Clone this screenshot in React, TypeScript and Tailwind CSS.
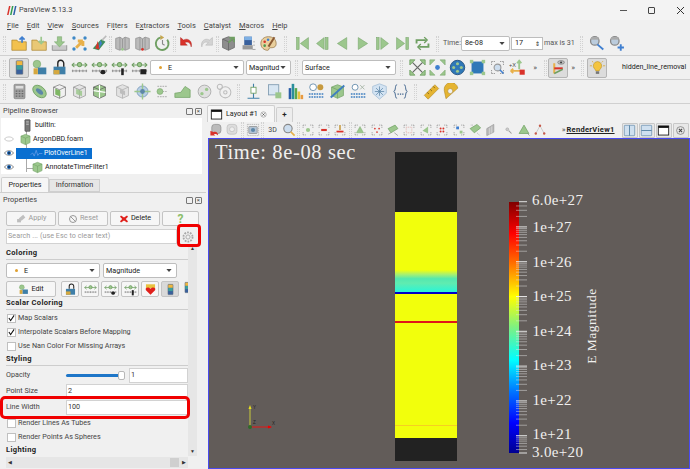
import React from "react";

const G = "#9cc78d";
const GD = "#6f9f62";
const Y = "#f2c14e";
const O = "#e8b04a";
const B = "#3f7fd0";
const R = "#d9322a";

const cube = (c: string, d: string, o = 1) => (
  <g opacity={o}>
    <path d="M10 2l7 2.800v10L10 18l-7-3.200v-10z" fill={c} stroke={d} strokeWidth=".8" />
    <path d="M3 4.800L10 8l7-3.200M10 8v10" fill="none" stroke={d} strokeWidth=".8" />
  </g>
);
const arrows = (c = GD) => (
  <g fill="none" stroke={c} strokeWidth="1.200">
    <path d="M1 7h18M1 7l3-2.500M1 7l3 2.500M19 7l-3-2.500M19 7l-3 2.500" />
    <circle cx="10" cy="6.500" r="2.500" fill={G} />
    <path d="M1 14h18M2 12.500v3M6 12.500v3M10 12.500v3M14 12.500v3M18 12.500v3" stroke="#777" strokeWidth=".8" />
  </g>
);
const frame = (<path d="M3 3h4M13 3h4M17 3v4M17 13v4M3 17h4M13 17h4M3 3v4M3 13v4" fill="none" stroke="#999" strokeWidth="1.200" strokeDasharray="1.500 1" />);
const bars = (
  <g>
    <rect x="6" y="2" width="8" height="16" rx="1" fill="#39609c" stroke="#777" strokeWidth=".6" />
    <rect x="6.500" y="2.500" width="7" height="5" fill="#f0b73e" />
    <rect x="6.500" y="7.500" width="7" height="5" fill="#3d9e9a" />
  </g>
);

const icons: Record<string, React.ReactNode> = {
  folderOpen: (<g><path d="M1 6h6l1.500 2H18v10H1z" fill={Y} stroke="#a8812c" strokeWidth=".8" /><path d="M13 9V3M10 5.500L13 2.500 16 5.500" stroke={B} strokeWidth="2" fill="none" /></g>),
  folderGreen: (<g><path d="M1 6h6l1.500 2H18v10H1z" fill="#e9c875" stroke="#a8812c" strokeWidth=".8" /><path d="M12 10V2M9 7l3 3 3-3" stroke={G} strokeWidth="2" fill="none" /></g>),
  save: (<g><path d="M1.500 12v6h17v-6" fill="#c9c9c9" stroke="#8d8d8d" /><path d="M7.500 2h5v6h3.500l-6 6-6-6h3.500z" fill={G} stroke={GD} strokeWidth=".6" /></g>),
  reset: (<g><path d="M6 15L14 7M14 7H8M14 7v6" stroke={O} strokeWidth="3.400" fill="none" /><g fill="#3f88c5"><circle cx="3.500" cy="3.500" r="2" /><circle cx="16.500" cy="3.500" r="2" /><circle cx="3.500" cy="16.500" r="2" /><circle cx="16.500" cy="16.500" r="2" /></g></g>),
  wand: (<g><path d="M2 16L12 5l5 3-8 10z" fill="#3f8f5f" /><path d="M5 16l3-9 2 10z" fill={R} /><path d="M9 16l2-10 2 4z" fill={B} /><path d="M13 6l5-5" stroke="#bbb" strokeWidth="1.800" /></g>),
  lib: (<g><path d="M2 4l5-1.500 3 2 3-2 5 1.500v12l-5 2-3-2-3 2-5-2z" fill="#bbb" stroke="#888" strokeWidth=".8" /><path d="M7 2.500v15M10 4.500v11M13 2.500v15" stroke="#8a8a8a" strokeWidth=".8" /><circle cx="10" cy="17" r="1.600" fill={G} /></g>),
  libR: (<g><path d="M2 4l5-1.500 3 2 3-2 5 1.500v12l-5 2-3-2-3 2-5-2z" fill="#bbb" stroke="#888" strokeWidth=".8" /><path d="M7 2.500v15M10 4.500v11M13 2.500v15" stroke="#8a8a8a" strokeWidth=".8" /><circle cx="10" cy="17" r="1.600" fill={R} /></g>),
  clock: (<g><path d="M15.500 5.500A7.500 7.500 0 1 1 8 2.800" fill="none" stroke={GD} strokeWidth="2.200" /><path d="M7.500 0l4.500 2.800L7.500 6z" fill="#c6a64f" /><path d="M10 6v4.500l2.500 1.500" stroke="#888" fill="none" strokeWidth="1.300" /></g>),
  undo: (<path d="M3 3v9h8L8 9c3-1.500 6.500-.5 7.500 5 2-6-3.500-11.500-9-8z" fill={R} stroke="#a51f1a" strokeWidth=".5" />),
  redo: (<path d="M17 3v9H9l3-3c-3-1.500-6.500-.5-7.500 5-2-6 3.500-11.500 9-8z" fill="#d3d3d3" stroke="#aaa" strokeWidth=".5" />),
  cubeArrow: (<g>{cube("#8d8d8d", "#5e5e5e")}<path d="M10 9l6-6M11 3h5.500v5.500" stroke={GD} strokeWidth="2" fill="none" /></g>),
  computer: (<g><rect x="5" y="2" width="9" height="10" fill="#39609c" /><rect x="5" y="2" width="9" height="4" fill="#7eb0e4" /><rect x="3" y="12" width="12" height="5" fill="#999" /><path d="M16 8h2M16 12h2M15 17h3" stroke="#555" strokeDasharray="1 1" /></g>),
  palette: (<g><path d="M10 2C5 2 1 5 1 10s4 8 8 8c2 0 1-3 3-3 3 0 7 0 7-5 0-5-4-8-9-8z" fill="#e9cf9d" stroke="#8d6c39" strokeWidth=".8" /><circle cx="5.500" cy="8" r="1.500" fill={R} /><circle cx="9.500" cy="5.500" r="1.500" fill={B} /><circle cx="5.500" cy="12.500" r="1.500" fill="#4a9b4f" /><path d="M9 13L16 2l2 1.200L11 14.500z" fill="#8a5a33" /></g>),
  first: (<g fill={G} stroke={GD} strokeWidth=".6"><rect x="3" y="3" width="3" height="14" /><path d="M17 3v14L7.500 10z" /></g>),
  prev: (<g fill={G} stroke={GD} strokeWidth=".6"><path d="M12 3v14L3 10z" /><rect x="13.500" y="3" width="3" height="14" /></g>),
  rev: (<path d="M15 3v14L4 10z" fill={G} stroke={GD} strokeWidth=".6" />),
  play: (<path d="M5 3v14l11-7z" fill={G} stroke={GD} strokeWidth=".6" />),
  next: (<g fill={G} stroke={GD} strokeWidth=".6"><rect x="3" y="3" width="3" height="14" /><path d="M8 3v14l9-7z" /></g>),
  last: (<g fill={G} stroke={GD} strokeWidth=".6"><path d="M3 3v14l9.500-7z" /><rect x="14" y="3" width="3" height="14" /></g>),
  loop: (<g fill="none" stroke={GD} strokeWidth="2.200"><path d="M3 10V6h11M17 10v4H6" /><path d="M12 2.500L15.500 6 12 9.500M8 10.500L4.500 14 8 17.500" strokeWidth="1.600" /></g>),
  zoomBlue: (<g><circle cx="8" cy="7" r="5" fill="#bcd" stroke="#888" strokeWidth="1.500" /><rect x="3.500" y="2.500" width="9" height="3" fill="#aaa" /><path d="M11 11l7 6" stroke={B} strokeWidth="2.200" /></g>),
  zoomPlus: (<g><circle cx="8" cy="7" r="5" fill="#bcd" stroke="#888" strokeWidth="1.500" /><rect x="3.500" y="2.500" width="9" height="3" fill="#aaa" /><path d="M15 11v7.500M11.250 14.750h7.500" stroke={B} strokeWidth="2.200" /></g>),
  colorMap: bars,
  blocks: (<g><circle cx="7" cy="6" r="4.500" fill={G} stroke={GD} strokeWidth=".6" /><rect x="8" y="10" width="10" height="8" fill="#3f7fa8" /><rect x="3" y="11" width="5" height="7" fill="#d6a83f" /></g>),
  lockMap: (<g><rect x="3" y="9" width="14" height="9" fill="#3f7fa8" /><rect x="3" y="13" width="7" height="5" fill="#d6a83f" /><path d="M8 9V5a3.500 3.500 0 0 1 7 0v4" fill="none" stroke="#222" strokeWidth="1.600" /></g>),
  ar: arrows(),
  arC: (<g>{arrows()}<rect x="11" y="13" width="6" height="5" rx="2.500" fill="#222" /></g>),
  arF: (<g>{arrows()}<rect x="12" y="11" width="3" height="8" fill="#222" /></g>),
  arD: (<g>{arrows()}<rect x="11" y="12" width="7" height="6" fill="#222" /></g>),
  fit: (<g stroke={GD} fill={G} strokeWidth="1"><path d="M4 4l12 12M16 4L4 16" stroke="#666" strokeWidth="1.400" /><path d="M1 1h6L1 7zM19 1h-6l6 6zM1 19h6l-6-6zM19 19h-6l6-6z" /></g>),
  fit2: (<g fill={G} stroke={GD} strokeWidth=".6"><path d="M1 1h6L1 7zM19 1h-6l6 6zM1 19h6l-6-6zM19 19h-6l6-6z" /><circle cx="10" cy="10" r="2.800" fill={B} stroke="none" /></g>),
  sphere: (<g><circle cx="10" cy="10" r="8.500" fill="#2f78b8" stroke="#1e4c78" /><g fill={G}><circle cx="10" cy="5.500" r="1.800" /><circle cx="10" cy="14.500" r="1.800" /><circle cx="5.500" cy="10" r="1.800" /><circle cx="14.500" cy="10" r="1.800" /></g></g>),
  fitBlock: (<g><rect x="3" y="3" width="14" height="14" fill="#2f78b8" /><g fill={G}><rect x="1" y="1" width="4" height="4" /><rect x="15" y="1" width="4" height="4" /><rect x="1" y="15" width="4" height="4" /><rect x="15" y="15" width="4" height="4" /></g></g>),
  zoomBox: (<g>{frame}<circle cx="10" cy="10" r="4" fill="#cde" stroke="#999" strokeWidth="1.300" /><path d="M13 13l4 4" stroke={B} strokeWidth="1.800" /></g>),
  axisSet: (<g><path d="M2 14h12M2 14l3-2.500M2 14l3 2.500" stroke={O} strokeWidth="2.200" fill="none" /><path d="M12 12V2M9.500 5L12 2l2.500 3" stroke={G} strokeWidth="2.200" fill="none" /><rect x="12.500" y="12.500" width="6" height="6" fill={R} /><text x="0" y="9" fontSize="6.500" fontFamily="Liberation Sans" fill="#444">+X</text></g>),
  orient: (<g><path d="M5 17V5" stroke={O} strokeWidth="2.400" /><path d="M5 11h10" stroke={R} strokeWidth="2.400" /><path d="M5 17l10-5" stroke={GD} strokeWidth="1.800" /><ellipse cx="13" cy="4" rx="4" ry="2.200" fill="#bbb" stroke="#666" strokeWidth=".6" /><circle cx="13" cy="4" r="1.100" fill="#333" /></g>),
  bulb: (<g><path d="M10 3a5 5 0 0 0-3.500 8.500c1 1 1.500 2.500 1.500 2.500h4s.5-1.500 1.500-2.500A5 5 0 0 0 10 3z" fill="#f4c43f" stroke="#b8912a" strokeWidth=".7" /><rect x="8" y="14.500" width="4" height="3" fill="#777" /><path d="M1 8h2.500M16.500 8H19M3.500 2.500L5 4M16.500 2.500L15 4" stroke="#d6aa3c" /></g>),
  calc: (<g><rect x="3.500" y="1.500" width="13" height="17" rx="1.500" fill="#a3a3a3" stroke="#6e6e6e" strokeWidth=".6" /><rect x="5.500" y="3.500" width="9" height="3" fill="#ddd" /><path d="M5.500 9.500h9M5.500 12.500h9M5.500 15.500h9" stroke="#666" strokeWidth="1.600" strokeDasharray="2 1.500" /></g>),
  slice: (<g><ellipse cx="10" cy="10" rx="9" ry="6" transform="rotate(40 10 10)" fill={G} stroke={GD} /><ellipse cx="10" cy="10" rx="5" ry="2.500" transform="rotate(40 10 10)" fill="#5d87a8" /></g>),
  cubeG: cube(G, GD),
  cubeW: (<g>{cube("#e4e4e4", "#8c8c8c")}<path d="M6 7l7 2.500v6L6 13z" fill={G} opacity=".85" /></g>),
  cubeV: (<g>{cube("#f0f0f0", "#6f6f6f")}<path d="M5 6.500l6 2.500v7l-6-2.500z" fill="#7fb765" /></g>),
  cubeC: (<g>{cube(G, "#555")}<path d="M10 2v16M3 9l14 2" stroke="#fff" strokeWidth="1.300" /></g>),
  cubeGrey: (<g>{cube("#e2e2e2", "#a8a8a8")}<path d="M7 7l6 2.500v5L7 12z" fill="#bdbdbd" /></g>),
  probe: (<g><circle cx="10" cy="10" r="6.500" fill="#b7cfe6" stroke="#7a9ab8" /><path d="M10 .5v19M.5 10h19" stroke={G} strokeWidth="1.600" /><circle cx="10" cy="10" r="2.800" fill="#5d87a8" /></g>),
  list: (<g><path d="M4 4h12M4 16h12M7 10h9" stroke="#b9b9b9" strokeWidth="1.400" strokeDasharray="2 1" /><circle cx="7" cy="10" r="3.500" fill={G} stroke={GD} strokeWidth=".6" /></g>),
  hill: (<path d="M1 17v-5l7-1 5-7 6 4v9z" fill={G} stroke={GD} strokeWidth=".8" />),
  circles: (<g><circle cx="10" cy="10" r="7.500" fill="#e0e0e0" stroke="#a8a8a8" /><circle cx="12.500" cy="7.500" r="2" fill={G} /><circle cx="7" cy="12.500" r="2" fill={G} /></g>),
  circlesW: (<g fill="none" stroke="#bbb" strokeWidth="1.200"><circle cx="11" cy="11" r="6.500" /><circle cx="4.500" cy="4.500" r="3" /><circle cx="11" cy="11" r="2" /></g>),
  plotBox: (<g stroke="#3f7fa8" fill="none"><path d="M3 18h14M10 1v17" strokeWidth="1.300" /><rect x="7" y="5" width="6" height="7" fill="#fff" stroke={GD} /></g>),
  ext: (<g><rect x="3" y="2" width="12" height="12" fill="#d8e6f2" stroke="#7f9ab0" /><rect x="11" y="11" width="7" height="7" fill={G} /></g>),
  hist: (<g><rect x="2" y="6" width="3" height="13" fill="#2a5da8" /><rect x="5.500" y="1" width="3" height="18" fill="#2a8f9c" /><rect x="9" y="6" width="3" height="13" fill="#5aa84f" /><rect x="12.500" y="10" width="3" height="9" fill="#e8c23f" /><rect x="16" y="14" width="3" height="5" fill="#e89a3f" /></g>),
  time1: (<g><circle cx="6" cy="5" r="4" fill="#fff" stroke="#5d87a8" /><circle cx="14.500" cy="5" r="3.500" fill="#c79a3f" /><path d="M1 13h18M1 16.500h18" stroke="#3f7fc0" strokeWidth="1.700" strokeDasharray="2 1" /></g>),
  cubeSlash: (<g>{cube(G, GD)}<path d="M2 17L18 3" stroke="#3f7fc0" strokeWidth="2.200" /></g>),
  time2: (<g><circle cx="6" cy="5" r="3.500" fill="#fff" stroke="#5d87a8" /><path d="M12 2.500l5 5M17 2.500l-5 5" stroke="#a0b0a0" /><path d="M1 13h18M1 16.500h18" stroke="#3f7fc0" strokeWidth="1.700" strokeDasharray="2 1" /></g>),
  shield: (<g><path d="M10 1l8 3v8l-8 7-8-7V4z" fill="#d3e3f2" stroke="#a8c0d8" /><path d="M10 4v11M4.500 10h11M6 6l8 8M14 6l-8 8" stroke="#5d87a8" strokeWidth=".9" /></g>),
  braces: (<g fill="none" stroke="#3a5f8a" strokeWidth="1.100"><path d="M6 2c-3 0-1 7-4 8 3 1 1 8 4 8M14 2c3 0 1 7 4 8-3 1-1 8-4 8" /><path d="M6.500 13h1.500M9.300 13h1.500M12 13h1.500" strokeWidth="1.400" /></g>),
  ruler: (<g><path d="M1.500 14.500L14 2l4.500 4.500L6 19z" fill="#e5b431" stroke="#a67f1e" strokeWidth=".6" /><path d="M5 11l2 2M8.500 7.500l2 2M12 4l2 2" stroke="#7a5e16" /></g>),
  protractor: (<g><path d="M3.500 18.500L1.500 9a8 8 0 0 1 16-3z" fill="#e5b431" stroke="#a67f1e" strokeWidth=".6" /><circle cx="8.500" cy="9.500" r="3" fill="#f0f0f0" stroke="#a67f1e" strokeWidth=".6" /></g>),
  layoutWin: (<g><rect x="2" y="3" width="16" height="14" fill="#fff" stroke="#111" strokeWidth="1.300" /><rect x="2" y="3" width="16" height="3" fill="#111" /></g>),
  camUndo: (<g><rect x="4" y="2" width="13" height="13" rx="4" fill="#bbb" stroke="#8a8a8a" /><path d="M2 11v7h7l-2-2c2-1 5 0 6 2 0-5-3-6.500-7-5z" fill={R} /></g>),
  camRedo: (<g><rect x="3" y="2" width="14" height="14" rx="4" fill="#ddd" stroke="#bbb" /><circle cx="10" cy="9" r="3.500" fill="#eee" stroke="#bbb" /></g>),
  camera: (<g><rect x="2" y="2" width="16" height="16" fill="none" stroke="#a7a7a7" strokeDasharray="2 1" /><rect x="4" y="5" width="12" height="10" rx="1" fill="#b4c4d4" stroke="#888" /><circle cx="10" cy="10" r="3" fill="#5d87a8" /></g>),
  zoomOrange: (<g><circle cx="8.500" cy="8" r="6" fill="#cde" stroke="#888" strokeWidth="1.600" /><path d="M12.500 12.500l5.500 5.500" stroke={O} strokeWidth="2.500" /></g>),
  selPlus: (<g>{frame}<circle cx="10" cy="10" r="3" fill={G} /></g>),
  selMinus: (<g>{frame}<rect x="6" y="8.500" width="8" height="3" fill={R} /></g>),
  selSub: (<g>{frame}<path d="M10 3v7" stroke="#c79a3f" strokeWidth="2.200" /><rect x="5" y="11" width="10" height="2.500" fill={R} /></g>),
  selTri: (<g>{frame}<path d="M10 5l5 9H5z" fill={G} stroke={GD} strokeWidth=".6" /></g>),
  selPts: (<g>{frame}<g fill={R}><circle cx="7" cy="8" r="1.200" /><circle cx="13" cy="8" r="1.200" /><circle cx="10" cy="13" r="1.200" /></g></g>),
  selPoly: (<g><path d="M3 8l10-5 4 5-10 6z" fill={G} stroke={GD} /><path d="M3 16l4-2M12 14l5 4" stroke="#888" /></g>),
  selDash: (<g>{frame}<path d="M6 6h8v8H6z" fill="none" stroke="#e0a8a0" strokeDasharray="1.500 1" /></g>),
  selLeaf: (<g>{frame}<path d="M5 11l8-6v10z" fill={G} /></g>),
  selDots: (<g>{frame}<g fill={R}><circle cx="8" cy="8" r="1.400" /><circle cx="12" cy="8" r="1.400" /><circle cx="8" cy="12" r="1.400" /><circle cx="12" cy="12" r="1.400" /></g></g>),
  selBlue: (<g>{frame}<rect x="6" y="5" width="4" height="4" fill={B} /><rect x="11" y="11" width="4" height="4" fill={G} /></g>),
  selPolyG: (<g><path d="M3 8l10-6 5 5-9 7z" fill={G} stroke={GD} /><path d="M4 3h3M13 14l4 4" stroke="#888" strokeDasharray="1 1" /></g>),
  selGrey: (<g><path d="M4 18V8l10-6v11z" fill="#bbb" stroke="#999" /><path d="M8 7v10M11 5v10" stroke="#ddd" /></g>),
  mag: (<g><circle cx="9" cy="9" r="2" fill="#ccc" stroke="#aaa" /><path d="M11 11l4 4" stroke="#999" strokeWidth="1.500" /></g>),
  tri: (<g><path d="M10 3l7 12H3z" fill={G} stroke={GD} /><path d="M15 15l3 3" stroke="#888" /></g>),
  triPts: (<g fill="#c65a4a"><path d="M10 4L4 15M10 4l6 11" stroke="#bbb" /><circle cx="10" cy="4" r="1.700" /><circle cx="4" cy="15" r="1.700" /><circle cx="16" cy="15" r="1.700" /></g>),
  split1: (<g><rect x="2" y="2" width="16" height="16" rx="1" fill="#cfe0f0" stroke="#5d87a8" /><path d="M10 2v16" stroke="#5d87a8" strokeWidth="1.500" /></g>),
  split2: (<g><rect x="2" y="2" width="16" height="16" rx="1" fill="#cfe0f0" stroke="#5d87a8" /><path d="M2 10h16" stroke="#5d87a8" strokeWidth="1.500" /></g>),
  closeC: (<g><circle cx="10" cy="10" r="6" fill="none" stroke="#666" /><path d="M7.500 7.500l5 5M12.500 7.500l-5 5" stroke="#444" strokeWidth="1.600" /></g>),
  gear: (<g fill="none" stroke="#a8a8a8"><circle cx="10" cy="10" r="3" strokeWidth="1.300" /><circle cx="10" cy="10" r="6.500" strokeWidth="2.600" strokeDasharray="2.500 1.580" /></g>),
  cross: (<path d="M4 3l6 4 6-4 2 2.500L13.500 10l4.500 4.500-2 2.500-6-4-6 4-2-2.500L6.500 10 2 5.500z" fill="#e0201c" />),
  heart: (<g><rect x="3" y="2" width="14" height="6" fill="#e8c23f" /><path d="M10 18L3 11c-2-3 3-6 7-2 4-4 9-1 7 2z" fill="#e0201c" /></g>),
  applyI: (<g><path d="M5 10l8-7 4 5-7 6z" fill="#c0c0c0" /><rect x="2" y="11" width="7" height="6" fill="#bdbdbd" /></g>),
  resetI: (<g><circle cx="10" cy="10" r="7" fill="none" stroke="#8f8f8f" strokeWidth="1.800" /><path d="M5 5l10 10" stroke="#8f8f8f" strokeWidth="1.800" /></g>),
  eye: (<g><path d="M1 10c3-6 15-6 18 0-3 6-15 6-18 0z" fill="#fff" stroke="#222" /><circle cx="10" cy="10" r="4" fill="#1c64b4" /><circle cx="10" cy="10" r="1.600" fill="#000" /></g>),
  eyeOff: (<path d="M1 10c3-5.500 15-5.500 18 0-3 5.500-15 5.500-18 0z" fill="#fff" stroke="#aaa" strokeWidth="1.200" />),
  server: (<g><rect x="6" y="1" width="8" height="18" rx="1" fill="#777" stroke="#333" strokeWidth=".8" /><path d="M8 4.500h4M8 8h4" stroke="#eee" /></g>),
  plot: (<path d="M1 12l3-3 2.500 5 3-9 2.500 8 2-3h5" fill="none" stroke="#6fa0e8" strokeWidth="1.100" />),
};

const Ico = ({ n, active }: { n: string; active?: boolean }) => (
  <span className={`flex h-5 w-5 shrink-0 items-center justify-center ${active ? "rounded-[2px] border border-[#b5b5b5] bg-[#dcdcdc]" : ""}`}>
    <svg width="17" height="17" viewBox="0 0 20 20">{icons[n]}</svg>
  </span>
);
const Sep = ({ cls = "" }: { cls?: string }) => <span className={`h-4 w-[3px] shrink-0 border-x border-dotted border-[#d2d2d2] ${cls}`} />;
const Icons = ({ names, gap = "" }: { names: string[]; gap?: string }) => (
  <div className={`flex items-center ${gap}`}>{names.map((n, i) => <Ico key={i} n={n} />)}</div>
);
const Chev = () => (
  <svg width="6" height="3" viewBox="0 0 7 4" className="shrink-0"><path d="M0 0h7L3.500 4z" fill="#444" /></svg>
);
const Combo = ({ label, w, dot }: { label: string; w: string; dot?: boolean }) => (
  <div className={`flex h-[15px] shrink-0 items-center rounded-[2px] border border-[#bdbdbd] bg-white pl-[2px] pr-[4px] text-[7.200px] leading-none text-[#222] ${w}`}>
    {dot && <span className="ml-[6px] mr-[6px] h-[3px] w-[3px] rounded-full bg-[#e0a030]" />}
    <span className="flex-1 whitespace-nowrap">{label}</span>
    <Chev />
  </div>
);
const Box = ({ checked }: { checked?: boolean }) => (
  <span className="mr-[2px] flex h-[9px] w-[9px] shrink-0 items-center justify-center border border-[#c0c0c0] bg-white">
    {checked && <svg width="8" height="8" viewBox="0 0 8 8"><path d="M1 4l2 3 4-6" fill="none" stroke="#111" strokeWidth="1.200" /></svg>}
  </span>
);
const Check = ({ label, checked }: { label: string; checked?: boolean }) => (
  <div className="flex h-[14px] items-center pl-[7px] text-[7.200px] text-[#444]"><Box checked={checked} /><span>{label}</span></div>
);
const Section = ({ label }: { label: string }) => (
  <div className="pl-[6px]">
    <div className="text-[7.500px] font-bold leading-[10px] tracking-[.35px] text-[#222]">{label}</div>
    <div className="mt-[1px] h-px bg-[#cdcdcd]" />
  </div>
);
const DockHead = ({ label }: { label: string }) => (
  <div className="flex h-[12px] items-center justify-between pl-[3px] pr-[4px] text-[7.300px] tracking-[.05px] text-[#444]">
    <span>{label}</span>
    <span className="flex gap-[2px]">
      <span className="h-[7px] w-[7px] rounded-[1px] border border-[#777]" />
      <span className="flex h-[7px] w-[7px] items-center justify-center rounded-[1px] border border-[#777] text-[6px] leading-none">×</span>
    </span>
  </div>
);
const Btn = ({ w, children, dim }: { w: string; children: React.ReactNode; dim?: boolean }) => (
  <div className={`flex h-[15px] shrink-0 items-center justify-center gap-[2px] rounded-[2px] border border-[#c4c4c4] bg-[#f6f6f6] text-[7.200px] ${dim ? "text-[#9a9a9a]" : "text-[#222]"} ${w}`}>{children}</div>
);
const TinyBtn = ({ n, active }: { n: string; active?: boolean }) => (
  <div className={`flex h-[16px] w-[18px] shrink-0 items-center justify-center rounded-[2px] border border-[#c4c4c4] ${active ? "bg-[#d9d9d9]" : "bg-[#f6f6f6]"}`}>
    <svg width="13" height="13" viewBox="0 0 20 20">{icons[n]}</svg>
  </div>
);
const TreeRow = ({ eye, pad, icon, label, sel }: { eye?: "on" | "off"; pad: string; icon: string; label: string; sel?: boolean }) => (
  <div className="relative flex h-[14px] items-center">
    <span className="flex w-[15px] shrink-0 justify-center">
      {eye && <svg width="10" height="10" viewBox="0 0 20 20">{icons[eye === "on" ? "eye" : "eyeOff"]}</svg>}
    </span>
    <span className={`flex h-[11px] items-center ${pad} ${sel ? "bg-[#0a6fd0]" : ""}`}>
      <svg width="13" height="13" viewBox="0 0 20 20" className="shrink-0">{icons[icon]}</svg>
      <span className={`pl-[1px] pr-[4px] text-[7px] ${sel ? "text-white" : "text-[#222]"}`}>{label}</span>
    </span>
  </div>
);
const Input = ({ v, w }: { v: string; w: string }) => (
  <div className={`flex h-[15px] items-center border border-[#d2d2d2] bg-white pl-[1px] text-[7.200px] text-[#333] ${w}`}>{v}</div>
);
const V = ({ n, w = "w-[16px]" }: { n: string; w?: string }) => (
  <span className={`flex shrink-0 justify-center ${w}`}><svg width="14" height="14" viewBox="0 0 20 20">{icons[n]}</svg></span>
);

const OFF_Y = 139;
const majors = [226.9, 261.7, 296.5, 331.3, 366.1, 400.9, 435.7];
const minor: number[] = [];
[192.1, ...majors].forEach((y) => {
  [2, 3, 4, 5, 6, 7, 8, 9].forEach((k) => {
    const p = y + 34.8 * (1 - Math.log10(k));
    if (p > 204 && p < 452) minor.push(p);
  });
});
const labels: [string, number][] = [["6.0e+27", 200], ["1e+27", 227.300], ["1e+26", 261.700], ["1e+25", 296.300], ["1e+24", 331], ["1e+23", 365], ["1e+22", 399.700], ["1e+21", 434.300], ["3.0e+20", 451.700]];
const mainTicks = [201.700, ...majors, 453];

const menu: [string, string, string][] = [["", "F", "ile"], ["", "E", "dit"], ["", "V", "iew"], ["", "S", "ources"], ["Fi", "l", "ters"], ["E", "x", "tractors"], ["", "T", "ools"], ["", "C", "atalyst"], ["", "M", "acros"], ["", "H", "elp"]];

export default function App() {
  return (
    <div className="flex h-[469px] w-[690px] flex-col overflow-hidden bg-[#f0f0f0] font-['Roboto',sans-serif] text-[#222]">
      {/* title */}
      <div className="flex h-[20px] shrink-0 items-center bg-[#f3f3f3] pl-[6px]">
        <svg width="11" height="9" viewBox="0 0 11 9"><path d="M1 9L3 0h1.500L2.500 9z" fill="#d9322a" /><path d="M4 9L6 0h1.500L5.500 9z" fill="#2f9a4f" /><path d="M7 9L9 0h1.500L8.500 9z" fill="#2a5da8" /></svg>
        <span className="ml-[2px] text-[7.400px] text-[#444]">ParaView 5.13.3</span>
        <div className="ml-auto flex items-center gap-[21px] pr-[5px] text-[#333]">
          <span className="h-px w-[7px] bg-[#555]" />
          <span className="h-[7px] w-[7px] rounded-[1px] border border-[#444]" />
          <svg width="9" height="9" viewBox="0 0 9 9"><path d="M1 1l7 7M8 1L1 8" stroke="#333" /></svg>
        </div>
      </div>
      {/* menu */}
      <div className="flex h-[12px] shrink-0 items-center gap-[8px] pl-[7px] text-[7.500px] leading-none text-[#444]">
        {menu.map(([a, u, b]) => (
          <span key={u + b}>{a}<span className="underline">{u}</span>{b}</span>
        ))}
      </div>
      {/* toolbar 1 */}
      <div className="flex h-[24px] shrink-0 items-center border-b border-[#d0d0d0] pl-[3px]">
        <Sep cls="mr-[3px]" />
        <Icons names={["folderOpen", "folderGreen", "save", "reset", "wand"]} />
        <Sep />
        <Icons names={["lib", "libR", "clock"]} />
        <Sep cls="mx-[0.500px]" />
        <Icons names={["undo", "redo"]} />
        <Sep cls="-mx-[0.500px]" />
        <Icons names={["cubeArrow", "computer", "palette"]} />
        <Sep cls="mx-[5.500px]" />
        <Icons names={["first", "prev", "rev", "play", "next", "last", "loop"]} />
        <Sep cls="mx-[4px]" />
        <span className="w-[18px] shrink-0 text-[7.200px] text-[#555]">Time:</span>
        <div className="flex h-[15px] w-[49px] shrink-0 items-center justify-between rounded-[2px] border border-[#bdbdbd] bg-white pl-[3px] pr-[4px]"><span className="text-[7.200px]">8e-08</span><Chev /></div>
        <div className="ml-[1px] flex h-[13px] w-[32px] shrink-0 items-center justify-between border border-[#bdbdbd] bg-white pl-[3px] pr-[2px]"><span className="text-[7.200px]">17</span><span className="text-[6px] leading-[6px]">⇕</span></div>
        <span className="ml-[1px] w-[31px] shrink-0 whitespace-nowrap text-[7.200px] text-[#555]">max is 31</span>
        <Sep cls="ml-[5px] mr-[3px]" />
        <Icons names={["zoomBlue", "zoomPlus"]} />
      </div>
      {/* toolbar 2 */}
      <div className="flex h-[24px] shrink-0 items-center border-b border-[#d0d0d0] pl-[3px]">
        <Sep cls="mr-[3px]" />
        <Ico n="colorMap" active />
        <Icons names={["blocks", "lockMap", "ar", "arC", "arF", "arD"]} />
        <span className="w-[1px]" />
        <Combo label="E" w="w-[94px]" dot />
        <span className="w-[2px]" />
        <Combo label="Magnitud" w="w-[45px]" />
        <Sep cls="mx-[4px]" />
        <Combo label="Surface" w="w-[94px]" />
        <Sep cls="mx-[4px]" />
        <Icons names={["fit", "fit2", "sphere", "fitBlock", "zoomBox", "axisSet"]} />
        <span className="w-[16px] text-center text-[8px] text-[#555]">»</span>
        <Sep cls="mx-[1px]" />
        <Ico n="orient" active />
        <span className="w-[10px] text-center text-[8px] text-[#555]">»</span>
        <Sep cls="mx-[3px]" />
        <Ico n="bulb" active />
        <span className="ml-[15px] whitespace-nowrap text-[7.100px] text-[#222]">hidden_line_removal</span>
      </div>
      {/* toolbar 3 */}
      <div className="flex h-[24px] shrink-0 items-center border-b border-[#d0d0d0] pl-[3px]">
        <Sep cls="mr-[3px]" />
        <Icons names={["calc", "slice", "cubeV", "cubeW", "cubeC"]} />
        <span className="w-[3px]" />
        <Icons names={["cubeGrey", "probe", "list", "hill"]} />
        <span className="w-[2px]" />
        <Icons names={["circles", "circlesW"]} />
        <Sep cls="mx-[3px]" />
        <Icons names={["plotBox", "ext", "hist", "time1", "cubeSlash", "time2", "shield", "braces"]} gap="gap-[1px]" />
        <Sep cls="mx-[4px]" />
        <Icons names={["ruler", "protractor"]} />
      </div>
      {/* body */}
      <div className="flex min-h-0 flex-1">
        {/* left */}
        <div className="relative flex w-[206px] shrink-0 flex-col pt-[1px]">
          <DockHead label="Pipeline Browser" />
          <div className="relative ml-[1px] mr-[4px] mt-[1px] h-[56px] bg-white">
            <span className="absolute left-[25px] top-[8px] h-[46px] w-px bg-[#aaaaaa]" />
            <span className="absolute left-[25px] top-[50px] h-px w-[8px] bg-[#aaaaaa]" />
            <TreeRow pad="pl-[5px]" icon="server" label="builtin:" />
            <TreeRow eye="off" pad="pl-[3px]" icon="cubeG" label="ArgonDBD.foam" />
            <TreeRow eye="on" pad="pl-[14px]" icon="plot" label="PlotOverLine1" sel />
            <TreeRow eye="on" pad="pl-[15px]" icon="cubeG" label="AnnotateTimeFilter1" />
          </div>
          <div className="mt-[4px] flex h-[14px] items-end pl-[1px] text-[7.200px]">
            <span className="flex h-[15px] w-[48px] items-center justify-center rounded-t-[2px] border border-b-0 border-[#cfcfcf] bg-[#f6f6f6] text-[#222]">Properties</span>
            <span className="flex h-[13px] w-[51px] items-center justify-center border border-[#cfcfcf] bg-[#e6e6e6] text-[#333]">Information</span>
          </div>
          <div className="border-t border-[#cfcfcf] pt-[1px]">
            <DockHead label="Properties" />
          </div>
          <div className="mt-[5px] flex gap-[2px] pl-[6px]">
            <Btn w="w-[50px]" dim><svg width="11" height="11" viewBox="0 0 20 20">{icons.applyI}</svg>Apply</Btn>
            <Btn w="w-[50px]" dim><svg width="10" height="10" viewBox="0 0 20 20">{icons.resetI}</svg>Reset</Btn>
            <Btn w="w-[50px]"><svg width="10" height="10" viewBox="0 0 20 20">{icons.cross}</svg>Delete</Btn>
            <Btn w="w-[37px]"><span className="text-[12px] font-bold leading-none text-[#8cbf6c]">?</span></Btn>
          </div>
          <div className="mt-[3px] flex items-center pl-[6px]">
            <div className="flex h-[15px] w-[171px] items-center border border-[#d2d2d2] bg-white pl-[1px] text-[7.200px] tracking-[.05px] text-[#9a9a9a]">Search ... (use Esc to clear text)</div>
            <span className="ml-[2px] flex w-[18px] justify-center"><svg width="14" height="14" viewBox="0 0 20 20">{icons.gear}</svg></span>
          </div>
          <div className="flex min-h-0 flex-1">
            <div className="w-[188px] shrink-0 overflow-hidden">
              <div className="mt-[4px]"><Section label="Coloring" /></div>
              <div className="mt-[3px] flex gap-[3px] pl-[6px]">
                <Combo label="E" w="w-[94px]" dot />
                <Combo label="Magnitude" w="w-[74px]" />
              </div>
              <div className="mt-[3px] flex gap-[2px] pl-[6px]">
                <div className="flex h-[16px] w-[50px] shrink-0 items-center justify-center gap-[2px] rounded-[2px] border border-[#c4c4c4] bg-[#f6f6f6] text-[7.200px]">
                  <svg width="11" height="11" viewBox="0 0 20 20">{icons.blocks}</svg>Edit
                </div>
                <span className="w-[1px]" />
                <TinyBtn n="lockMap" /><TinyBtn n="ar" /><TinyBtn n="arC" /><TinyBtn n="arF" />
                <TinyBtn n="heart" /><TinyBtn n="colorMap" active />
                <div className="flex h-[16px] w-[7px] justify-start overflow-hidden"><svg width="13" height="13" viewBox="0 0 20 20" className="shrink-0">{icons.colorMap}</svg></div>
              </div>
              <div className="mt-[1px]"><Section label="Scalar Coloring" /></div>
              <div className="mt-[1px]">
                <Check label="Map Scalars" checked />
                <Check label="Interpolate Scalars Before Mapping" checked />
                <Check label="Use Nan Color For Missing Arrays" />
              </div>
              <div className="mt-[1px]"><Section label="Styling" /></div>
              <div className="mt-[2px] flex h-[15px] items-center pl-[6px] text-[7.200px] text-[#444]">
                <span className="w-[60px]">Opacity</span>
                <div className="relative flex h-[9px] w-[59px] items-center">
                  <span className="h-[3px] w-[56px] rounded-full bg-[#1e76c8]" />
                  <span className="absolute right-[0px] h-[9px] w-[7px] rounded-[2px] border border-[#b8b8b8] bg-white" />
                </div>
                <span className="w-[4px]" />
                <Input v="1" w="w-[59px]" />
              </div>
              <div className="mt-[1px] flex h-[15px] items-center pl-[6px] text-[7.200px] text-[#444]">
                <span className="w-[60px]">Point Size</span>
                <Input v="2" w="w-[122px]" />
              </div>
              <div className="mt-[1px] flex h-[15px] items-center pl-[6px] text-[7.200px] text-[#444]">
                <span className="w-[60px]">Line Width</span>
                <Input v="100" w="w-[122px]" />
              </div>
              <div className="mt-[1px]">
                <Check label="Render Lines As Tubes" />
                <Check label="Render Points As Spheres" />
              </div>
              <div className="mt-[1px]"><Section label="Lighting" /></div>
            </div>
            <div className="flex w-[9px] shrink-0 flex-col items-center justify-between bg-[#e6e6e6] py-[2px] text-[5px] leading-none text-[#333]">
              <span>▲</span><span>▼</span>
            </div>
          </div>
          <div className="mb-[1px] ml-[6px] mr-[18px] mt-[1px] flex h-[11px] shrink-0 items-center justify-between bg-[#e6e6e6] px-[2px] text-[5px] text-[#333]">
            <span>◀</span><span className="ml-auto mr-[3px] h-[9px] w-[9px] bg-[#cfcfcf]" /><span>▶</span>
          </div>
          {/* red highlights */}
          <div className="absolute left-[177px] top-[120px] h-[23px] w-[24px] rounded-[4px] border-[3px] border-[#f00000]" />
          <div className="absolute left-0 top-[292px] h-[23px] w-[190px] rounded-[5px] border-[3px] border-[#f00000]" />
        </div>
        {/* right */}
        <div className="flex min-w-0 flex-1 flex-col pt-[1px]">
          <div className="flex h-[17px] shrink-0 items-end pl-[1px] text-[7.200px]">
            <div className="flex h-[17px] w-[68px] items-center rounded-t-[2px] border border-b-0 border-[#cfcfcf] bg-[#f6f6f6] pl-[2px]">
              <svg width="13" height="13" viewBox="0 0 20 20">{icons.layoutWin}</svg>
              <span className="ml-[3px] whitespace-nowrap">Layout #1</span>
              <svg width="9" height="9" viewBox="0 0 20 20" className="ml-[1px]">{icons.closeC}</svg>
            </div>
            <div className="ml-[1px] flex h-[15px] w-[17px] items-center justify-center rounded-t-[2px] border border-b-0 border-[#cfcfcf] bg-[#ededed] text-[8px] font-bold">+</div>
          </div>
          <div className="flex h-[16px] shrink-0 items-center pl-[2px]">
            <V n="camUndo" /><V n="camRedo" />
            <Sep cls="mx-[1px]" />
            <V n="camera" />
            <Sep />
            <span className="flex w-[17px] shrink-0 justify-center text-[7px] text-[#444]">3D</span>
            <V n="zoomOrange" />
            <Sep />
            <V n="selPlus" /><V n="selMinus" /><V n="selSub" />
            <Sep cls="mx-[0.500px]" />
            {["selTri", "selPts", "selPoly", "selDash", "selLeaf", "selDots", "selBlue", "selPolyG", "selGrey", "mag", "tri", "triPts"].map((n, i) => <V key={i} n={n} w="w-[16.400px]" />)}
            <span className="ml-[13px] shrink-0 text-[8px] text-[#555]">»</span>
            <span className="ml-[1px] shrink-0 whitespace-nowrap text-[7.500px] font-bold tracking-[.3px] text-[#222] underline">RenderView1</span>
            <div className="ml-[7px] flex items-center gap-[1px]">
              {["split1", "split2", "layoutWin", "closeC"].map((n, i) => (
                <span key={i} className="flex h-[15px] w-[16px] shrink-0 items-center justify-center rounded-[1px] border border-[#c8c8c8] bg-[#e8e8e8]"><svg width="13" height="13" viewBox="0 0 20 20">{icons[n]}</svg></span>
              ))}
            </div>
          </div>
          {/* viewport */}
          <div className="relative ml-[2px] min-h-0 flex-1 overflow-hidden border border-[#4a4af0] bg-[#625c59] font-['Liberation_Serif',serif] text-[#f0efee]">
            <div className="absolute left-[6px] top-0 whitespace-nowrap text-[20.500px] leading-[26px] tracking-[.65px]">Time: 8e-08 sec</div>
            {/* column */}
            <div className="absolute left-[186px] top-[13px] flex h-[309px] w-[62px] flex-col">
              <div className="h-[60px] bg-[#222222]" />
              <div className="relative h-[226px] bg-[#f2ff0c]">
                <div className="absolute inset-x-0 top-[58px] h-[22px] bg-[linear-gradient(#f2ff0c,#a8f070_20%,#53e8b0_40%,#60ecb0_60%,#28f5d8_100%)]" />
                <div className="absolute inset-x-0 top-[80px] h-[2px] bg-[#0000c8]" />
                <div className="absolute inset-x-0 top-[109px] h-[2px] bg-[#e01818]" />
                <div className="absolute inset-x-0 top-[213px] h-px bg-[#f6d020]" />
              </div>
              <div className="h-[23px] bg-[#222222]" />
            </div>
            {/* colour bar */}
            <div className="absolute left-[300px] top-[63px] h-[251px] w-[10px] bg-[linear-gradient(#800000_0%,#ff0000_12.600%,#ff7000_24.500%,#ffff00_37.700%,#80f080_49.700%,#00ffff_62.900%,#0070ff_76%,#0000ff_88.100%,#000090_100%)]" />
            <svg className="absolute left-[300px] top-[50px]" width="20" height="280" viewBox="0 0 20 280">
              {minor.map((y, i) => <path key={i} d={`M7 ${(y - OFF_Y - 50).toFixed(2)}h11`} stroke="#e2e2e2" strokeOpacity=".7" strokeWidth=".7" />)}
              {mainTicks.map((y) => <path key={y} d={`M${y === 201.7 || y === 453 ? 10 : 7} ${(y - OFF_Y - 50).toFixed(2)}h${y === 201.7 || y === 453 ? 8 : 11}`} stroke="#f0f0f0" strokeWidth=".9" />)}
            </svg>
            {labels.map(([l, y]) => (
              <div key={l} className={`absolute whitespace-nowrap text-[15px] leading-[16px] tracking-[.35px] ${l.includes(".") ? "left-[323px]" : "left-[323.500px]"}`} style={{ top: y - OFF_Y - 8 }}>{l}</div>
            ))}
            <div className="absolute left-[345px] top-[179px] origin-center -rotate-90 whitespace-nowrap text-[13.500px] leading-[16px] tracking-[.5px]">E Magnitude</div>
            {/* axes */}
            <svg className="absolute left-[35px] top-[265px]" width="34" height="28" viewBox="0 0 34 28">
              <path d="M6 23V3" stroke="#b8b840" strokeWidth="1.200" />
              <path d="M6 23h21" stroke="#d02020" strokeWidth="1.200" />
              <path d="M4.500 5L6 1l1.500 4z" fill="#e8e020" />
              <path d="M24 21.500l4 1.500-4 1.500z" fill="#f00000" />
              <circle cx="6" cy="23" r="2" fill="#2f6a2a" />
              <text x="9" y="5" fontSize="4.500" fontFamily="Liberation Sans" fill="#222">Y</text>
              <text x="28" y="21" fontSize="4.500" fontFamily="Liberation Sans" fill="#222">X</text>
              <text x="9" y="20" fontSize="4.500" fontFamily="Liberation Sans" fill="#222">Z</text>
            </svg>
          </div>
        </div>
      </div>
    </div>
  );
}
